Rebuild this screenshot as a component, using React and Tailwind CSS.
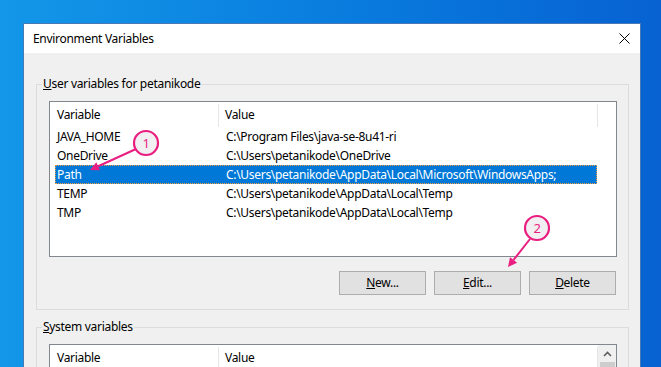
import React from 'react'

const FONT = { fontFamily: '"Noto Sans", "Liberation Sans", sans-serif' }

const USER_VARS = [
  { name: 'JAVA_HOME', value: 'C:\\Program Files\\java-se-8u41-ri' },
  { name: 'OneDrive', value: 'C:\\Users\\petanikode\\OneDrive' },
  { name: 'Path', value: 'C:\\Users\\petanikode\\AppData\\Local\\Microsoft\\WindowsApps;', selected: true },
  { name: 'TEMP', value: 'C:\\Users\\petanikode\\AppData\\Local\\Temp' },
  { name: 'TMP', value: 'C:\\Users\\petanikode\\AppData\\Local\\Temp' }
]

function ListHeader() {
  return (
    <div className="flex h-[25px] items-stretch">
      <div className="flex w-[168px] items-center pl-[7px]">Variable</div>
      <div className="mt-[2px] w-px bg-[#e5e5e5]" />
      <div className="flex w-[378px] items-center pl-[6px]">Value</div>
      <div className="mt-[2px] w-px bg-[#e5e5e5]" />
    </div>
  )
}

function Row({ name, value, selected }) {
  return (
    <div
      className={`ml-[5px] flex h-[19px] w-[542px] items-center ${
        selected ? 'border border-dotted border-[#f0a040] bg-[#0078d7] text-white' : 'border border-transparent'
      }`}
    >
      <div className="w-[170px] pl-[1px]">{name}</div>
      <div className="whitespace-nowrap">{value}</div>
    </div>
  )
}

function Button({ children }) {
  return (
    <button className="flex h-[24px] w-[87px] items-center justify-center border border-[#adadad] bg-[#e1e1e1] text-black">
      {children}
    </button>
  )
}

function Annotation({ cx, cy, label, x1, y1, x2, y2 }) {
  const pink = '#e91e80'
  const ang = Math.atan2(y2 - y1, x2 - x1)
  const len = 9
  const w = 4.5
  const bx = x2 - len * Math.cos(ang)
  const by = y2 - len * Math.sin(ang)
  const p1 = `${bx + w * Math.sin(ang)},${by - w * Math.cos(ang)}`
  const p2 = `${bx - w * Math.sin(ang)},${by + w * Math.cos(ang)}`
  return (
    <g>
      <line x1={x1} y1={y1} x2={bx} y2={by} stroke={pink} strokeWidth="2" />
      <polygon points={`${x2},${y2} ${p1} ${p2}`} fill={pink} />
      <circle cx={cx} cy={cy} r="12" fill="#f1eff1" stroke={pink} strokeWidth="2.2" />
      <text x={cx} y={cy + 4.5} textAnchor="middle" fontSize="13" fill={pink} style={FONT}>
        {label}
      </text>
    </g>
  )
}

export default function App() {
  return (
    <div
      className="relative h-[367px] w-[661px] overflow-hidden bg-linear-to-r from-[#1497e8] via-[#0a7ddf] to-[#0862d2] pl-[23px] pt-[23px] text-[12px] tracking-[-0.3px] text-black"
      style={FONT}
    >
      {/* Dialog */}
      <div className="w-[618px] border-x border-t border-[#4a78b4] bg-[#f0f0f0]">
        {/* Title bar */}
        <div className="flex h-[29px] items-center justify-between bg-white pl-[9px] pr-[10px]">
          <span>Environment Variables</span>
          <svg width="11" height="11" viewBox="0 0 11 11">
            <path d="M0.5 0.5 L10.5 10.5 M10.5 0.5 L0.5 10.5" stroke="#000" strokeWidth="1" />
          </svg>
        </div>

        <div className="pl-[12px] pr-[11px] pt-[22px]">
          {/* User variables */}
          <fieldset className="border border-[#dcdcdc] px-[5px] pb-[14px]">
            <legend className="px-[1px]">
              <u>U</u>ser variables for petanikode
            </legend>
            <div className="pl-[7px] pr-[6px] pt-[8px]">
              <div className="h-[156px] border border-[#828790] bg-white">
                <ListHeader />
                {USER_VARS.map(v => (
                  <Row key={v.name} {...v} />
                ))}
              </div>
              <div className="mt-[14px] flex justify-end gap-[8px] pr-[1px]">
                <Button><u>N</u>ew...</Button>
                <Button><u>E</u>dit...</Button>
                <Button><u>D</u>elete</Button>
              </div>
            </div>
          </fieldset>

          {/* System variables */}
          <fieldset className="mt-[8px] border border-[#dcdcdc] px-[5px] pb-[14px]">
            <legend className="px-[1px]">
              <u>S</u>ystem variables
            </legend>
            <div className="pl-[7px] pr-[6px] pt-[8px]">
              <div className="flex h-[156px] border border-[#828790] bg-white">
                <div className="flex-1">
                  <ListHeader />
                </div>
                <div className="flex w-[18px] flex-col border-l border-[#f0f0f0] bg-[#f0f0f0]">
                  <div className="flex h-[17px] items-center justify-center">
                    <svg width="9" height="6" viewBox="0 0 9 6">
                      <path d="M1 5 L4.5 1.5 L8 5" stroke="#606060" strokeWidth="1.6" fill="none" />
                    </svg>
                  </div>
                  <div className="mx-[1px] flex-1 bg-[#cdcdcd]" />
                </div>
              </div>
            </div>
          </fieldset>
        </div>
      </div>

      {/* Callouts */}
      <svg className="pointer-events-none absolute inset-0" width="661" height="367" viewBox="0 0 661 367">
        <Annotation cx={146} cy={143} label="1" x1={136} y1={149} x2={90} y2={170} />
        <Annotation cx={537} cy={228} label="2" x1={530} y1={239} x2={508} y2={267} />
      </svg>
    </div>
  )
}
